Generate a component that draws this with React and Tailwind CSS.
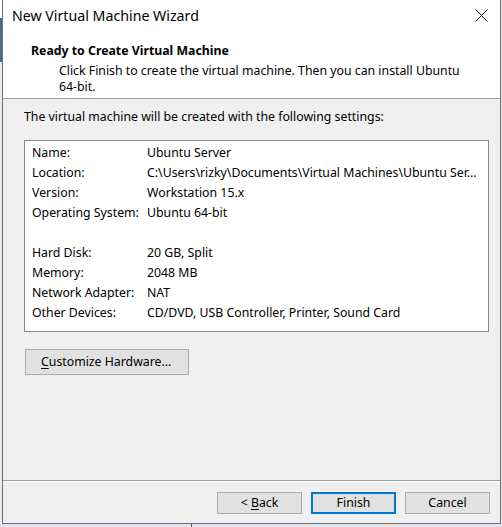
import React from "react";

const rows = [
  ["Name:", "Ubuntu Server"],
  ["Location:", "C:\\Users\\rizky\\Documents\\Virtual Machines\\Ubuntu Ser..."],
  ["Version:", "Workstation 15.x"],
  ["Operating System:", "Ubuntu 64-bit"],
  ["", ""],
  ["Hard Disk:", "20 GB, Split"],
  ["Memory:", "2048 MB"],
  ["Network Adapter:", "NAT"],
  ["Other Devices:", "CD/DVD, USB Controller, Printer, Sound Card"],
];

const font = { fontFamily: '"Noto Sans", "Open Sans", sans-serif' };

export default function App() {
  return (
    <div
      className="w-[502px] h-[527px] flex flex-col bg-[#dfe5ea] overflow-hidden text-black"
      style={font}
    >
      <div className="flex h-[524px]">
        <div className="w-[2px] flex flex-col">
          <div className="h-[18px] bg-white" />
          <div className="h-[44px] bg-[#4d6a8c]" />
          <div className="flex-1 bg-[#e8ecef]" />
        </div>
        <div className="w-[499px] flex flex-col border-l border-r border-b border-[#6f6f6f] bg-[#f0f0f0]">
          <div className="h-[31px] bg-white flex items-center justify-between pl-[9px] pr-[12px]">
            <span className="text-[14.2px] leading-[20px]">New Virtual Machine Wizard</span>
            <svg width="13" height="13" viewBox="0 0 13 13" className="mt-[-1px]">
              <path d="M0.5 0.5 L12.5 12.5 M12.5 0.5 L0.5 12.5" stroke="#111" strokeWidth="1" fill="none" />
            </svg>
          </div>
          <div className="h-[68px] bg-white border-b border-[#a0a0a0] pt-[12px]">
            <div className="pl-[28px] text-[12.3px] leading-[16px] font-bold">Ready to Create Virtual Machine</div>
            <div className="pl-[56px] mt-[4px] text-[12.3px] leading-[16px]">
              Click Finish to create the virtual machine. Then you can install Ubuntu
              <br />
              64-bit.
            </div>
          </div>
          <div className="flex-1 flex flex-col pt-[10px] pl-[21px]">
            <div className="text-[12.3px] leading-[16px]">
              The virtual machine will be created with the following settings:
            </div>
            <div className="mt-[15px] w-[465px] h-[192px] bg-white border border-[#828790] pt-[2px] pl-[7px]">
              {rows.map(([k, v], i) => (
                <div key={i} className="flex h-[20px] items-center text-[12.3px] leading-[20px] whitespace-nowrap">
                  <span className="w-[115px] shrink-0">{k}</span>
                  <span>{v}</span>
                </div>
              ))}
            </div>
            <div className="mt-[17px] ml-[1px] w-[164px] h-[26px] bg-[#e1e1e1] border border-[#adadad] flex items-center pl-[15px] pt-[1px] text-[12.3px]">
              <span>
                <span className="underline underline-offset-2">C</span>ustomize Hardware...
              </span>
            </div>
          </div>
          <div className="h-[1px] bg-[#a0a0a0]" />
          <div className="h-[1px] bg-white" />
          <div className="h-[41px] flex justify-end items-start pt-[10px] pr-[10px] gap-[9px]">
            <div className="w-[85px] h-[22px] bg-[#e1e1e1] border border-[#adadad] flex items-center justify-center pt-[1px] text-[12.3px]">
              <span>
                &lt; <span className="underline underline-offset-2">B</span>ack
              </span>
            </div>
            <div className="w-[85px] h-[22px] bg-[#e1e1e1] border-2 border-[#0078d7] flex items-center justify-center pt-[1px] text-[12.3px]">
              Finish
            </div>
            <div className="w-[85px] h-[22px] bg-[#e1e1e1] border border-[#adadad] flex items-center justify-center pt-[1px] text-[12.3px]">
              Cancel
            </div>
          </div>
        </div>
        <div className="w-[1px] bg-[#e6e6e6]" />
      </div>
      <div className="h-[3px] flex">
        <div className="w-[191px] bg-[#dfe5ea]" />
        <div className="w-[1px] bg-[#555]" />
        <div className="flex-1 bg-[#dfe5ea]" />
      </div>
    </div>
  );
}
